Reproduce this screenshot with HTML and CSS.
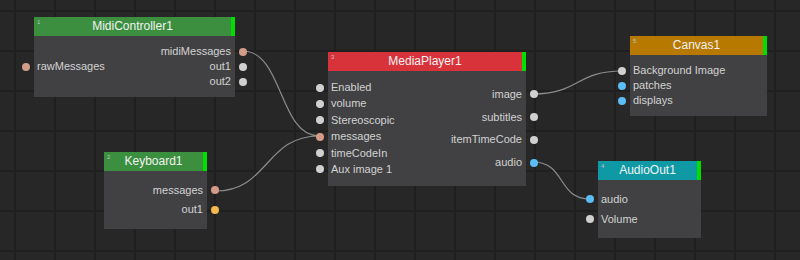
FILE: index.html
```html
<!DOCTYPE html>
<html lang="en">
  <head>
    <meta charset="UTF-8" />
    <title>Patch Editor</title>
    <link rel="stylesheet" href="styles.css">
  </head>
  <body>
    <div class="canvas">
      <!-- wires sit under the nodes -->
      <svg class="wires" width="800" height="260" viewBox="0 0 800 260">
        <path d="M243 51 C 283 51, 279 136, 319 136" />
        <path d="M215 191 C 269 191, 265 136, 319 136" />
        <path d="M533 94 C 579 94, 576 71, 622 71" />
        <path d="M533 162 C 566 162, 557 199, 590 199" />
      </svg>

      <div class="node node-midi">
        <div class="node-head head-green"><span class="node-id">1</span>MidiController1</div>
        <div class="node-body">
          <div class="ports ports-in">
            <div class="port"><i class="dot dot-msg"></i>rawMessages</div>
          </div>
          <div class="ports ports-out">
            <div class="port"><i class="dot dot-msg"></i>midiMessages</div>
            <div class="port"><i class="dot"></i>out1</div>
            <div class="port"><i class="dot"></i>out2</div>
          </div>
        </div>
      </div>

      <div class="node node-keyboard">
        <div class="node-head head-green"><span class="node-id">2</span>Keyboard1</div>
        <div class="node-body">
          <div class="ports ports-out">
            <div class="port"><i class="dot dot-msg"></i>messages</div>
            <div class="port"><i class="dot dot-num"></i>out1</div>
          </div>
        </div>
      </div>

      <div class="node node-media">
        <div class="node-head head-red"><span class="node-id">3</span>MediaPlayer1</div>
        <div class="node-body">
          <div class="ports ports-in">
            <div class="port"><i class="dot"></i>Enabled</div>
            <div class="port"><i class="dot"></i>volume</div>
            <div class="port"><i class="dot"></i>Stereoscopic</div>
            <div class="port"><i class="dot dot-msg"></i>messages</div>
            <div class="port"><i class="dot"></i>timeCodeIn</div>
            <div class="port"><i class="dot"></i>Aux image 1</div>
          </div>
          <div class="ports ports-out">
            <div class="port"><i class="dot"></i>image</div>
            <div class="port"><i class="dot"></i>subtitles</div>
            <div class="port"><i class="dot"></i>itemTimeCode</div>
            <div class="port"><i class="dot dot-audio"></i>audio</div>
          </div>
        </div>
      </div>

      <div class="node node-canvas">
        <div class="node-head head-orange"><span class="node-id">5</span>Canvas1</div>
        <div class="node-body">
          <div class="ports ports-in">
            <div class="port"><i class="dot"></i>Background Image</div>
            <div class="port"><i class="dot dot-audio"></i>patches</div>
            <div class="port"><i class="dot dot-audio"></i>displays</div>
          </div>
        </div>
      </div>

      <div class="node node-audio">
        <div class="node-head head-teal"><span class="node-id">4</span>AudioOut1</div>
        <div class="node-body">
          <div class="ports ports-in">
            <div class="port"><i class="dot dot-audio"></i>audio</div>
            <div class="port"><i class="dot"></i>Volume</div>
          </div>
        </div>
      </div>
    </div>
  </body>
</html>
```

FILE: styles.css
```css
* {
  margin: 0;
  padding: 0;
  box-sizing: border-box;
  font-family: "Liberation Sans", Arial, sans-serif;
}

body {
  width: 800px;
  height: 260px;
  overflow: hidden;
  background: #272727;
}

/* Editor grid */
.canvas {
  position: relative;
  width: 800px;
  height: 260px;
  background-color: #272727;
  background-image: linear-gradient(to right, #1f1f1f 2px, transparent 2px),
    linear-gradient(to bottom, #1f1f1f 2px, transparent 2px);
  background-size: 40px 40px;
  background-position: 14px 10px;
}

.wires {
  position: absolute;
  top: 0;
  left: 0;
}

.wires path {
  fill: none;
  stroke: #8c8c8c;
  stroke-width: 1.2;
}

.node {
  position: absolute;
  display: flex;
  flex-direction: column;
  background: #414143;
}

.node-head {
  position: relative;
  height: 19px;
  line-height: 19px;
  font-size: 12px;
  color: #f2f2f2;
  text-align: center;
  border-right: 4px solid #00e000;
}

.node-id {
  position: absolute;
  left: 3px;
  top: 2px;
  font-size: 6px;
  line-height: 6px;
  color: #b9c4c8;
}

.head-green {
  background: #3b8f3f;
}

.head-red {
  background: #d8323a;
}

.head-orange {
  background: #b77900;
}

.head-teal {
  background: #0e99a5;
}

.node-body {
  flex: 1;
  display: flex;
  align-items: center;
  justify-content: space-between;
}

.ports {
  display: flex;
  flex-direction: column;
  gap: var(--gap, 2px);
}

.ports-out {
  margin-left: auto;
}

.port {
  position: relative;
  height: 13px;
  line-height: 13px;
  font-size: 11px;
  color: #d2d2d2;
  white-space: nowrap;
}

.ports-in .port {
  padding-left: 3px;
}

.ports-out .port {
  padding-right: 4px;
  text-align: right;
}

.dot {
  position: absolute;
  top: 2.5px;
  width: 8px;
  height: 8px;
  border-radius: 50%;
  background: #d0d0d0;
}

.ports-in .dot {
  left: -12px;
}

.ports-out .dot {
  right: -12px;
}

.dot-msg {
  background: #d39c88;
}

.dot-audio {
  background: #5cbcf4;
}

.dot-num {
  background: #f4b84c;
}

/* Node placement on the canvas */
.node-midi {
  left: 34px;
  top: 17px;
  width: 201px;
  height: 80px;
}

.node-midi .ports-out {
  --gap: 2px;
}

.node-keyboard {
  left: 104px;
  top: 152px;
  width: 103px;
  height: 77px;
}

.node-keyboard .ports-out {
  --gap: 6.5px;
}

.node-media {
  left: 328px;
  top: 52px;
  width: 198px;
  height: 134px;
}

.node-media .ports-in {
  --gap: 3.4px;
}

.node-media .ports-out {
  --gap: 9.7px;
}

.node-canvas {
  left: 630px;
  top: 36px;
  width: 137px;
  height: 80px;
}

.node-canvas .ports-in {
  --gap: 2px;
}

.node-audio {
  left: 598px;
  top: 161px;
  width: 103px;
  height: 77px;
}

.node-audio .ports-in {
  --gap: 7px;
}
```
